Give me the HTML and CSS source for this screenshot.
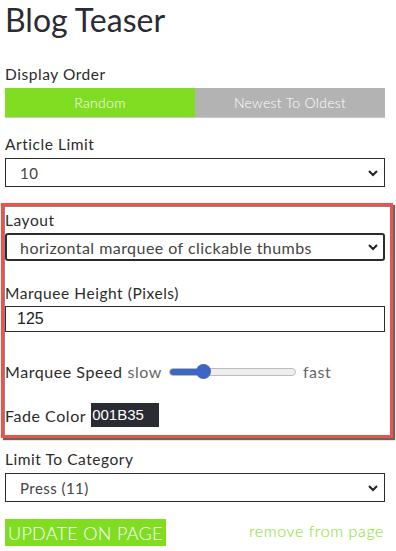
FILE: index.html
```html
<!DOCTYPE html>
<html lang="en">
  <head>
    <meta charset="UTF-8" />
    <meta name="viewport" content="width=device-width, initial-scale=1.0" />
    <title>Blog Teaser</title>
    <link rel="stylesheet" href="styles.css">
  </head>
  <body>
    <div class="panel">
      <h1>Blog Teaser</h1>

      <div class="field field-order">
        <label>Display Order</label>
        <div class="toggle">
          <button class="toggle-btn active">Random</button>
          <button class="toggle-btn">Newest To Oldest</button>
        </div>
      </div>

      <div class="field">
        <label>Article Limit</label>
        <div class="select">
          <span>10</span>
          <svg class="chev" width="12" height="8" viewBox="0 0 12 8"><path d="M2 2 L6 6 L10 2" fill="none" stroke="#222" stroke-width="2"/></svg>
        </div>
      </div>

      <div class="highlight">
        <div class="field">
          <label>Layout</label>
          <div class="select select-focus">
            <span>horizontal marquee of clickable thumbs</span>
            <svg class="chev" width="12" height="8" viewBox="0 0 12 8"><path d="M2 2 L6 6 L10 2" fill="none" stroke="#222" stroke-width="2"/></svg>
          </div>
        </div>

        <div class="field">
          <label>Marquee Height (Pixels)</label>
          <input type="text" class="text-input" value="125" />
        </div>

        <div class="speed-row">
          <span class="label-inline">Marquee Speed</span>
          <span class="muted">slow</span>
          <div class="slider">
            <div class="slider-fill"></div>
            <div class="slider-thumb"></div>
          </div>
          <span class="muted">fast</span>
        </div>

        <div class="fade-row">
          <span class="label-inline">Fade Color</span>
          <span class="swatch">001B35</span>
        </div>
      </div>

      <div class="field">
        <label>Limit To Category</label>
        <div class="select">
          <span>Press (11)</span>
          <svg class="chev" width="12" height="8" viewBox="0 0 12 8"><path d="M2 2 L6 6 L10 2" fill="none" stroke="#222" stroke-width="2"/></svg>
        </div>
      </div>

      <div class="actions">
        <button class="update-btn">UPDATE ON PAGE</button>
        <a href="#" class="remove-link">remove from page</a>
      </div>
    </div>
  </body>
</html>
```

FILE: styles.css
```css
body {
  font-family: Lato, "Open Sans", sans-serif;
  background-color: #fff;
  color: #2b2b2b;
  letter-spacing: 0.45px;
  margin: 0;
  padding: 0;
}

.panel {
  width: 380px;
  padding: 0 0 0 5px;
}

h1 {
  font-size: 32px;
  font-weight: 400;
  line-height: 40px;
  letter-spacing: 0;
  margin: 0 0 24px;
  color: #2b2b33;
}

.field {
  margin-bottom: 16px;
}

label {
  display: block;
  font-size: 15.5px;
  line-height: 20px;
  letter-spacing: 0.55px;
  margin-bottom: 4px;
}

.toggle {
  display: flex;
  height: 30px;
}

.toggle-btn {
  flex: 1;
  border: none;
  border-bottom: 1px solid #c8c8c8;
  background-color: #b3b3b3;
  color: #fff;
  font-family: inherit;
  font-size: 14px;
  font-weight: 300;
  letter-spacing: 0.3px;
  padding: 0;
}

.toggle-btn.active {
  background-color: #80dd22;
}

.select {
  display: flex;
  align-items: center;
  justify-content: space-between;
  height: 27px;
  border: 1px solid #2b2b33;
  padding: 0 5px 0 14px;
  font-size: 15px;
  color: #444;
}

.select-focus {
  border: 2px solid #2b2b33;
  border-radius: 3px;
  height: 24px;
  padding-left: 13px;
  padding-right: 4px;
  font-size: 16px;
}

.chev {
  flex: none;
}

.highlight {
  margin: 0 -8px 11px -4px;
  padding: 4px 5px 8px 1px;
  border: 3px solid #f0524a;
  box-shadow: inset 1px 1px 0 #888, 2px 2px 1px #666;
}

.highlight .field {
  margin-bottom: 22px;
}

.highlight label {
  margin-bottom: 3px;
}

.text-input {
  display: block;
  box-sizing: border-box;
  width: 100%;
  height: 26px;
  border: 1px solid #2b2b33;
  padding: 0 11px;
  font-family: "Liberation Sans", Arial, sans-serif;
  font-size: 16px;
  letter-spacing: 0;
  color: #222;
}

.speed-row {
  display: flex;
  align-items: center;
  gap: 5px;
  font-size: 16px;
  letter-spacing: 0.55px;
  margin-top: 30px;
  margin-bottom: 22px;
}

.label-inline {
  color: #2b2b2b;
}

.muted {
  color: #666;
}

.slider {
  position: relative;
  width: 125px;
  height: 6px;
  margin: 0 2px;
  border: 1px solid #bbb;
  border-radius: 4px;
  background-color: #eee;
}

.slider-fill {
  width: 33px;
  height: 100%;
  border-radius: 4px;
  background-color: #3d66c4;
}

.slider-thumb {
  position: absolute;
  left: 26px;
  top: -5px;
  width: 15px;
  height: 15px;
  border-radius: 50%;
  background-color: #3d66c4;
}

.fade-row {
  display: flex;
  align-items: center;
  gap: 5px;
  font-size: 16px;
  letter-spacing: 0.55px;
}

.swatch {
  display: inline-block;
  width: 68px;
  height: 24px;
  line-height: 24px;
  background-color: #2b2b33;
  color: #fff;
  font-family: "Liberation Sans", Arial, sans-serif;
  font-size: 15px;
  letter-spacing: 0;
  padding-left: 1px;
  box-sizing: border-box;
}

.actions {
  display: flex;
  align-items: center;
  justify-content: space-between;
  margin-top: 17px;
}

.update-btn {
  height: 27px;
  border: none;
  padding: 0 3px;
  background-color: #80dd22;
  color: #fff;
  font-family: inherit;
  font-size: 18px;
  font-weight: 300;
  letter-spacing: 0.3px;
}

.remove-link {
  color: #80dd22;
  text-decoration: none;
  font-size: 16px;
  font-weight: 300;
  letter-spacing: 0.6px;
  margin-right: 1px;
  margin-top: -4px;
}
```
